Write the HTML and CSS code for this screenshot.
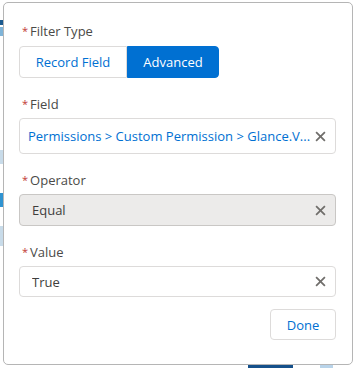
FILE: index.html
```html
<!DOCTYPE html>
<html>
<head>
<meta charset="utf-8">
<link rel="stylesheet" href="styles.css">
</head>
<body>
<div class="backdrop">
  <span class="bg bg-a"></span>
  <span class="bg bg-b"></span>
  <span class="bg bg-c"></span>
  <span class="bg bg-d"></span>
  <span class="bg bg-e"></span>
  <span class="bg bg-f"></span>
  <span class="bg bg-g"></span>
</div>
<div class="popover">
  <div class="form-element first">
    <div class="label"><abbr class="req">*</abbr>Filter Type</div>
    <div class="btn-group">
      <button class="seg">Record Field</button>
      <button class="seg active">Advanced</button>
    </div>
  </div>

  <div class="form-element">
    <div class="label"><abbr class="req">*</abbr>Field</div>
    <div class="input tall">
      <span class="value link">Permissions &gt; Custom Permission &gt; Glance.V...</span>
      <svg class="clear" viewBox="0 0 10 10"><path d="M1 1L9 9M9 1L1 9"/></svg>
    </div>
  </div>

  <div class="form-element">
    <div class="label"><abbr class="req">*</abbr>Operator</div>
    <div class="input disabled">
      <span class="value">Equal</span>
      <svg class="clear" viewBox="0 0 10 10"><path d="M1 1L9 9M9 1L1 9"/></svg>
    </div>
  </div>

  <div class="form-element">
    <div class="label"><abbr class="req">*</abbr>Value</div>
    <div class="input last">
      <span class="value">True</span>
      <svg class="clear" viewBox="0 0 10 10"><path d="M1 1L9 9M9 1L1 9"/></svg>
    </div>
  </div>

  <div class="footer">
    <button class="done">Done</button>
  </div>
</div>
</body>
</html>
```

FILE: styles.css
```css
* { box-sizing: border-box; }
html, body {
  margin: 0;
  padding: 0;
  background: #fff;
  width: 356px;
  height: 368px;
  overflow: hidden;
  font-family: "Open Sans", "Noto Sans", sans-serif;
  font-size: 13px;
  color: #3e3e3c;
}
body { position: relative; }

.backdrop { position: absolute; inset: 0; }
.bg { position: absolute; display: block; }
.bg-a { left: 0; top: 20px; width: 3px; height: 5px; background: #1b5a8f; }
.bg-b { left: 0; top: 27px; width: 3px; height: 9px; background: #7fb4d8; }
.bg-c { left: 0; top: 150px; width: 3px; height: 14px; background: #c8dbe9; }
.bg-d { left: 0; top: 193px; width: 3px; height: 14px; background: #2f93d1; }
.bg-e { left: 0; top: 226px; width: 3px; height: 20px; background: #c8dbe9; }
.bg-f { left: 248px; top: 365px; width: 45px; height: 3px; background: #15508a; }
.bg-g { left: 320px; top: 365px; width: 13px; height: 3px; background: #b9d4ea; }

.popover {
  position: absolute;
  left: 3px;
  top: 2px;
  width: 350px;
  height: 363px;
  background: #fff;
  border: 1px solid #b5b5b5;
  border-radius: 5px;
  padding: 19px 16px 0 15px;
  display: flex;
  flex-direction: column;
}

.form-element { margin-top: 17px; }
.form-element.first { margin-top: 0; }

.label {
  height: 18px;
  line-height: 18px;
  padding-left: 3px;
  margin-bottom: 5px;
  color: #4a4a48;
  font-size: 13px;
  white-space: nowrap;
}
.form-element.first .label { margin-bottom: 6px; }

.req {
  color: #c23934;
  text-decoration: none;
  font-size: 11px;
  margin-right: 2px;
  vertical-align: top;
}

.btn-group { display: flex; }
.seg {
  font-family: inherit;
  font-size: 13px;
  height: 32px;
  border: 1px solid #dddbda;
  background: #fff;
  color: #0070d2;
  padding: 0;
  margin: 0;
  line-height: 30px;
}
.seg:first-child {
  width: 108px;
  border-radius: 4px 0 0 4px;
}
.seg.active {
  width: 92px;
  background: #0070d2;
  border-color: #0070d2;
  color: #fff;
  border-radius: 0 4px 4px 0;
}

.input {
  height: 32px;
  border: 1px solid #dddbda;
  border-radius: 4px;
  background: #fff;
  display: flex;
  align-items: center;
  padding: 0 9px 0 12px;
}
.input.tall { height: 36px; padding-left: 8px; }
.input.last { height: 31px; }
.input.disabled { background: #ecebea; border-color: #c9c7c5; }
.value { flex: 1; white-space: nowrap; overflow: hidden; color: #3e3e3c; }
.value.link { color: #0070d2; }
.clear {
  width: 11px;
  height: 11px;
  flex: none;
  stroke: #706e6b;
  stroke-width: 1.6;
  fill: none;
}

.footer {
  display: flex;
  justify-content: flex-end;
  margin-top: 12px;
}
.done {
  font-family: inherit;
  font-size: 13px;
  width: 66px;
  height: 31px;
  border: 1px solid #dddbda;
  border-radius: 4px;
  background: #fff;
  color: #0070d2;
  padding: 0;
}
```
